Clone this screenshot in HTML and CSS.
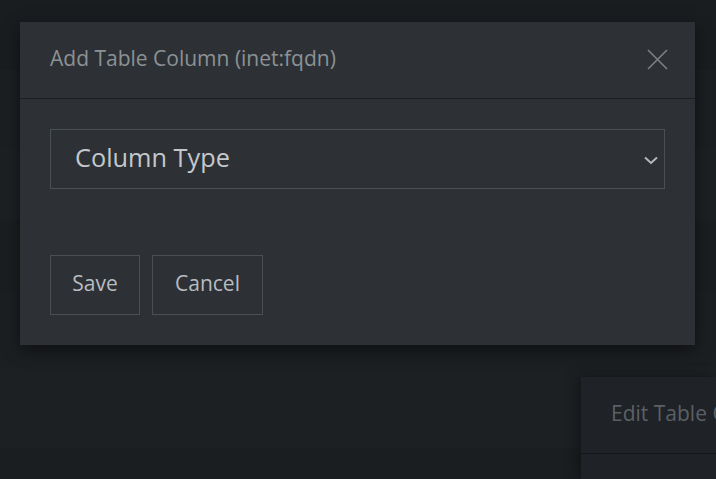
FILE: index.html
```html
<!DOCTYPE html>
<html>
<head>
<meta charset="utf-8">
<link rel="stylesheet" href="styles.css">
</head>
<body>
<div class="page">
  <div class="band b1"></div>
  <div class="band b2"></div>
  <div class="band b3"></div>
  <div class="band b4"></div>
  <div class="band b5"></div>
  <div class="band b6"></div>
  <div class="band b7"></div>
</div>

<div class="modal back-modal">
  <div class="modal-header"><span class="title dim">Edit Table Column</span></div>
</div>

<div class="modal main-modal">
  <div class="modal-header">
    <span class="title">Add Table Column (inet:fqdn)</span>
    <svg class="close" width="21" height="21" viewBox="0 0 21 21"><path d="M1 1L20 20M20 1L1 20" stroke="#7c8085" stroke-width="1.6" fill="none"/></svg>
  </div>
  <div class="modal-body">
    <div class="select">
      <span>Column Type</span>
      <svg width="14" height="9" viewBox="0 0 14 9"><path d="M1 1.5L7 7L13 1.5" stroke="#b4b8bc" stroke-width="2" fill="none"/></svg>
    </div>
    <div class="actions">
      <button class="btn save">Save</button>
      <button class="btn cancel">Cancel</button>
    </div>
  </div>
</div>
</body>
</html>
```

FILE: styles.css
```css
html, body {
  margin: 0;
  padding: 0;
  width: 716px;
  height: 479px;
  overflow: hidden;
  background: #1b1e21;
  font-family: "Open Sans", "Noto Sans", sans-serif;
}
.page {
  display: flex;
  flex-direction: column;
}
.band { width: 100%; }
.b1 { height: 70px; background: #1a1d20; }
.b2 { height: 78px; background: #1c1f22; }
.b3 { height: 72px; background: #1d2023; }
.b4 { height: 73px; background: #1b1e21; }
.b5 { height: 74px; background: #1c1f22; }
.b6 { height: 81px; background: #1d2023; }
.b7 { height: 40px; background: #1b1e21; }

.modal {
  position: absolute;
  box-sizing: border-box;
}
.main-modal {
  left: 20px;
  top: 22px;
  width: 675px;
  background: #2d3135;
  box-shadow: 0 5px 15px rgba(0,0,0,0.5);
}
.back-modal {
  left: 581px;
  top: 377px;
  width: 135px;
  height: 102px;
  overflow: hidden;
  background: #1f2226;
  box-shadow: -4px 0 12px rgba(0,0,0,0.35);
}
.modal-header {
  box-sizing: border-box;
  height: 77px;
  padding: 0 27px 5px 30px;
  display: flex;
  align-items: center;
  justify-content: space-between;
  border-bottom: 1px solid #1c1f22;
}
.modal-header .close { margin-top: 4px; }
.back-modal .modal-header {
  border-bottom-color: #15181a;
  padding-right: 0;
  white-space: nowrap;
}
.title {
  font-size: 21px;
  color: #8c9196;
}
.title.dim { color: #5b6065; }
.close { display: block; }
.modal-body {
  padding: 30px;
}
.select {
  box-sizing: border-box;
  height: 60px;
  border: 1px solid #4a4f54;
  display: flex;
  align-items: center;
  justify-content: space-between;
  padding: 0 6px 4px 24px;
  font-size: 25.3px;
  color: #c4c8cc;
}
.select svg { display: block; margin-top: 6px; }
.actions {
  margin-top: 66px;
  display: flex;
  gap: 12px;
}
.btn {
  box-sizing: border-box;
  height: 60px;
  background: transparent;
  border: 1px solid #4a4f54;
  color: #b8bcc0;
  font-family: "Open Sans", "Noto Sans", sans-serif;
  font-size: 21px;
  padding: 0 0 5px 0;
  margin: 0;
}
.save { width: 90px; }
.cancel { width: 111px; }
```
